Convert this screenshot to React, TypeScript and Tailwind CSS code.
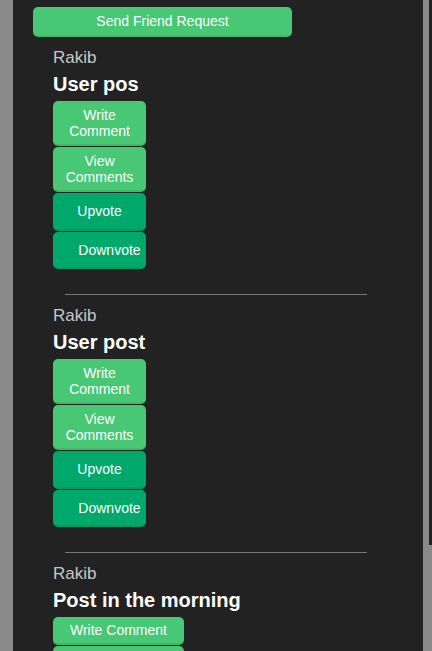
import React from 'react'

type Post = { author: string; title: string; wide?: boolean }

const posts: Post[] = [
  { author: 'Rakib', title: 'User pos' },
  { author: 'Rakib', title: 'User post' },
  { author: 'Rakib', title: 'Post in the morning', wide: true },
]

function Btn(props: { children: React.ReactNode; dark?: boolean; wide?: boolean; className?: string }) {
  const { children, dark = false, wide = false, className = '' } = props
  return (
    <button
      className={
        (dark ? 'bg-[#00a86b] border-b-[#039b5f] ' : 'bg-[#48c774] border-b-[#3dbb68] ') +
        (wide ? 'w-[131px] ' : 'w-[93px] ') +
        'block rounded-[5px] border-b-2 text-[14px] leading-[16px] text-white ' +
        className
      }
    >
      {children}
    </button>
  )
}

function PostCard({ post }: { post: Post }) {
  return (
    <div className="pl-[40px]">
      <div className="text-[17px] leading-[20px] text-[#c8c8c8] pt-[1px]">{post.author}</div>
      <h2 className="text-[20px] leading-[24px] font-bold text-white mt-[4px] mb-[5px]">{post.title}</h2>
      <div className="flex flex-col gap-[1px]">
        {post.wide ? (
          <Btn wide className="h-[28px]">Write Comment</Btn>
        ) : (
          <Btn className="h-[45px]">Write<br />Comment</Btn>
        )}
        {post.wide ? (
          <Btn wide className="h-[28px]">View Comments</Btn>
        ) : (
          <Btn className="h-[45px]">View<br />Comments</Btn>
        )}
        <Btn dark wide={post.wide} className="h-[38px]">Upvote</Btn>
        <Btn dark wide={post.wide} className="h-[37px] pl-[20px]">Downvote</Btn>
      </div>
    </div>
  )
}

export default function App() {
  return (
    <div
      className="flex h-[651px] w-[432px] overflow-hidden bg-[#8a8a8a]"
      style={{ fontFamily: '"Liberation Sans", Arial, sans-serif' }}
    >
      <div className="ml-[13px] w-[410px] shrink-0 bg-[#222222] pt-[7px]">
        <div className="pl-[20px]">
          <button className="block h-[30px] w-[259px] rounded-[5px] border-b-2 border-b-[#3dbb68] bg-[#48c774] text-[14px] text-white">
            Send Friend Request
          </button>
        </div>
        <div className="mt-[10px]">
          {posts.map((p, i) => (
            <div key={i}>
              {i > 0 && <hr className="ml-[52px] mr-[56px] mt-[25px] mb-[10px] border-0 border-t border-t-[#777777]" />}
              <PostCard post={p} />
            </div>
          ))}
        </div>
      </div>
      <div className="ml-[6px] h-[545px] w-[3px] bg-[#222222]" />
    </div>
  )
}
